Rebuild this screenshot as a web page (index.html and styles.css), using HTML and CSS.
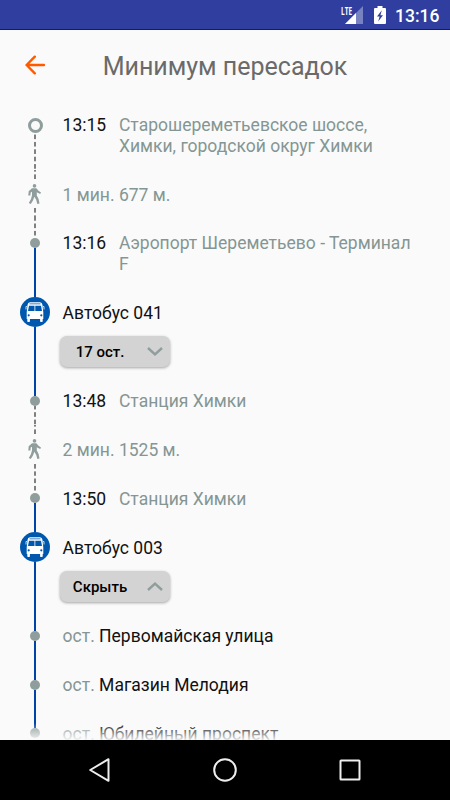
FILE: index.html
```
<!DOCTYPE html>
<html lang="ru">
<head>
    <meta charset="UTF-8">
    <meta name="viewport" content="width=device-width, initial-scale=1.0">
    <title>Минимум пересадок</title>
    <link rel="stylesheet" href="styles.css">
</head>
<body>
    <svg class="sprite" width="0" height="0">
        <symbol id="walk" viewBox="0 0 14 20">
            <circle cx="6.5" cy="1.9" r="1.8"/>
            <path d="M4 4.200h4.400l2.100 2.500 2.500 1.800-.8 1.500-3-1.600-.4-.4v3.600l1.800 3.400.9 4.600-2.200.4-1.100-4.200-1.900-3-1.200 3.400-2.300 3.700-2-1 2.100-3.700L4 11.300V7.700l-1.300.9-.3 2.800H.3L.7 7.200z"/>
        </symbol>
        <symbol id="bus" viewBox="0 0 30 30">
            <circle cx="15" cy="15" r="15" fill="#0058ae"/>
            <path fill="#fff" d="M10 5.300h10q2.200 0 2.500 2.700l.8 7.500v6.500h-.6v2.300q0 .7-.7.7h-1.200q-.7 0-.7-.7V22H9.900v2.300q0 .7-.7.7H8q-.7 0-.7-.7V22h-.6v-6.500L7.500 8Q7.800 5.300 10 5.300z"/>
            <path fill="#0058ae" d="M9.500 6.500h11v.7h-11zM9 8.700h5.500v5.200H8zM15.300 8.700H21l1 5.200h-6.700z"/>
            <circle cx="8.700" cy="18.300" r="1.100" fill="#0058ae"/>
            <circle cx="21.300" cy="18.300" r="1.100" fill="#0058ae"/>
            <path fill="none" stroke="#fff" stroke-width=".8" d="M6.900 9.500H6v3M23.100 9.500h.9v3"/>
        </symbol>
    </svg>

    <div class="screen">
        <div class="status-bar">
            <svg class="signal" width="24" height="20" viewBox="0 0 24 20">
                <path fill="#fff" opacity=".35" d="M23 1v18H5z"/>
                <path fill="#fff" d="M16 8v11H5z"/>
                <text x="1" y="9.500" textLength="11" lengthAdjust="spacingAndGlyphs">LTE</text>
            </svg>
            <svg class="battery" width="12" height="18" viewBox="0 0 12 18">
                <path fill="#fff" d="M3.500 0h5v2H11q1 0 1 1v14q0 1-1 1H1q-1 0-1-1V3q0-1 1-1h2.500z"/>
                <path fill="#303f9f" d="M7.800 4.300 3 10.600h2.600l-1.400 5L9 9.300H6.400z"/>
            </svg>
            <span class="clock">13:16</span>
        </div>

        <div class="header">
            <svg class="back" width="20" height="20" viewBox="0 0 20 20">
                <path d="M9.800 1.700 1.600 10l8.200 8.300M1.600 10H19"/>
            </svg>
            <h1>Минимум пересадок</h1>
        </div>

        <div class="route">
            <div class="row">
                <div class="rail"><i class="seg"></i><i class="ring"></i><i class="seg dashed before-walk"></i></div>
                <div class="time">13:15</div>
                <div class="place">Старошереметьевское шоссе, Химки, городской округ Химки</div>
            </div>
            <div class="row">
                <div class="rail walk"><i class="seg dashed to-walk"></i><svg class="walk-icon"><use href="#walk"/></svg><i class="seg dashed"></i></div>
                <div class="info muted">1 мин. 677 м.</div>
            </div>
            <div class="row">
                <div class="rail"><i class="seg dashed after-walk"></i><i class="dot"></i><i class="seg solid"></i></div>
                <div class="time">13:16</div>
                <div class="place">Аэропорт Шереметьево - Терминал F</div>
            </div>
            <div class="row">
                <div class="rail bus"><i class="seg solid"></i><svg class="bus-icon"><use href="#bus"/></svg><i class="seg solid"></i></div>
                <div class="info">Автобус 041
                    <button class="toggle"><span>17 ост.</span><svg width="16" height="9" viewBox="0 0 16 9"><path d="M1 1l7 6.300L15 1"/></svg></button>
                </div>
            </div>
            <div class="row">
                <div class="rail"><i class="seg solid"></i><i class="dot"></i><i class="seg dashed before-walk"></i></div>
                <div class="time">13:48</div>
                <div class="place">Станция Химки</div>
            </div>
            <div class="row">
                <div class="rail walk"><i class="seg dashed to-walk"></i><svg class="walk-icon"><use href="#walk"/></svg><i class="seg dashed"></i></div>
                <div class="info muted">2 мин. 1525 м.</div>
            </div>
            <div class="row">
                <div class="rail"><i class="seg dashed after-walk"></i><i class="dot"></i><i class="seg solid"></i></div>
                <div class="time">13:50</div>
                <div class="place">Станция Химки</div>
            </div>
            <div class="row">
                <div class="rail bus"><i class="seg solid"></i><svg class="bus-icon"><use href="#bus"/></svg><i class="seg solid"></i></div>
                <div class="info">Автобус 003
                    <button class="toggle"><span>Скрыть</span><svg width="16" height="9" viewBox="0 0 16 9"><path d="M1 8l7-6.300L15 8"/></svg></button>
                </div>
            </div>
            <div class="row">
                <div class="rail"><i class="seg solid"></i><i class="dot"></i><i class="seg solid"></i></div>
                <div class="info"><span class="muted">ост.</span> Первомайская улица</div>
            </div>
            <div class="row">
                <div class="rail"><i class="seg solid"></i><i class="dot"></i><i class="seg solid"></i></div>
                <div class="info"><span class="muted">ост.</span> Магазин Мелодия</div>
            </div>
            <div class="row">
                <div class="rail"><i class="seg solid"></i><i class="dot"></i></div>
                <div class="info"><span class="muted">ост.</span> Юбилейный проспект</div>
            </div>
            <div class="fade"></div>
        </div>

        <div class="nav-bar">
            <svg width="24" height="26" viewBox="0 0 24 26"><path d="M20.500 2.200v21.600L2.200 13z"/></svg>
            <svg width="24" height="24" viewBox="0 0 24 24"><circle cx="12" cy="12" r="10.800"/></svg>
            <svg width="24" height="24" viewBox="0 0 24 24"><rect x="2.500" y="2.500" width="19" height="19" rx=".5"/></svg>
        </div>
    </div>
</body>
</html>
```
FILE: styles.css
```
* {
    box-sizing: border-box;
}
body {
    margin: 0;
    font-family: Roboto, sans-serif;
    background-color: #fafafa;
}
.sprite {
    display: none;
}
.screen {
    display: flex;
    flex-direction: column;
    width: 450px;
    height: 800px;
    overflow: hidden;
}
.status-bar {
    display: flex;
    flex: none;
    align-items: center;
    justify-content: flex-end;
    height: 30px;
    padding-right: 11px;
    background-color: #303f9f;
    border-bottom: 1px solid #0a1a8c;
    color: #fff;
}
.signal {
    margin-right: 10px;
    overflow: visible;
}
.signal text {
    font: bold 10.5px "Open Sans", sans-serif;
    fill: #fff;
}
.battery {
    margin-right: 9px;
}
.clock {
    width: 44px;
    padding-top: 2px;
    font-size: 17.5px;
    font-weight: 500;
    white-space: nowrap;
}
.header {
    display: grid;
    flex: none;
    grid-template-columns: 60px 1fr 60px;
    align-items: center;
    height: 70.7px;
}
.back {
    margin-left: 25px;
    fill: none;
    stroke: #ff5a00;
    stroke-width: 2.4;
    stroke-linecap: round;
    stroke-linejoin: round;
}
h1 {
    margin: 2px 0 0;
    text-align: center;
    font-size: 25px;
    font-weight: 400;
    color: #6a6a6a;
}
.route {
    position: relative;
    flex: 1;
    min-height: 0;
    overflow: hidden;
}
.row {
    display: flex;
    min-height: 48.7px;
    padding: 0 30px 0 20px;
    font-size: 17.5px;
    line-height: 20.5px;
    color: #111;
}
.rail {
    display: flex;
    flex: none;
    flex-direction: column;
    align-items: center;
    width: 30px;
    margin-right: 12.6px;
}
.seg {
    width: 2px;
    flex: 1;
}
.seg:first-child {
    flex: 0 0 19.3px;
}
.solid {
    background-color: #0044a8;
}
.dashed {
    background: linear-gradient(#808080 4.4px, transparent 4.4px) 0 0 / 100% 7.4px;
}
.dot {
    flex: none;
    width: 10px;
    height: 10px;
    border-radius: 50%;
    background-color: #8f9e9c;
}
.ring {
    flex: none;
    width: 15px;
    height: 15px;
    margin-top: -2px;
    border: 3px solid #8f9e9c;
    border-radius: 50%;
}
.before-walk {
    background-position: 0 calc(100% + 1.6px);
}
.to-walk {
    background-position: 0 -3px;
}
.after-walk {
    background-position: 0 4.5px;
}
.walk .seg:first-child {
    flex-basis: 8.8px;
}
.walk-icon {
    flex: none;
    width: 14px;
    height: 20px;
    margin: 5px 0 4.5px;
    fill: #8f9e9c;
}
.bus .seg:first-child {
    flex-basis: 9.3px;
}
.bus-icon {
    flex: none;
    width: 30px;
    height: 30px;
}
.time {
    flex: none;
    width: 56.4px;
    padding-top: 14.8px;
}
.place {
    flex: 1;
    padding: 14.8px 0 13.4px;
    color: #849693;
}
.info {
    flex: 1;
    padding-top: 14.8px;
}
.muted {
    color: #849693;
}
.toggle {
    display: flex;
    align-items: center;
    width: 110px;
    height: 31px;
    margin: 12.6px 0 10px -2.6px;
    padding: 1px 7px 0 0;
    border: none;
    border-radius: 7px;
    background-color: #d3d3d3;
    box-shadow: 0 1px 3px rgba(0, 0, 0, 0.35);
    font-family: inherit;
    font-size: 15px;
    font-weight: 500;
    color: #000;
}
.toggle span {
    flex: 1;
    padding-right: 7px;
    text-align: center;
}
.toggle svg {
    fill: none;
    stroke: #8f9e9c;
    stroke-width: 2.4;
}
.fade {
    position: absolute;
    left: 0;
    right: 0;
    bottom: 0;
    height: 17px;
    background: linear-gradient(rgba(250, 250, 250, 0), rgba(250, 250, 250, 0.9));
}
.nav-bar {
    display: flex;
    flex: none;
    align-items: center;
    justify-content: center;
    gap: 101px;
    height: 60px;
    background-color: #000;
}
.nav-bar svg {
    fill: none;
    stroke: #eee;
    stroke-width: 2;
    stroke-linejoin: round;
}
```
